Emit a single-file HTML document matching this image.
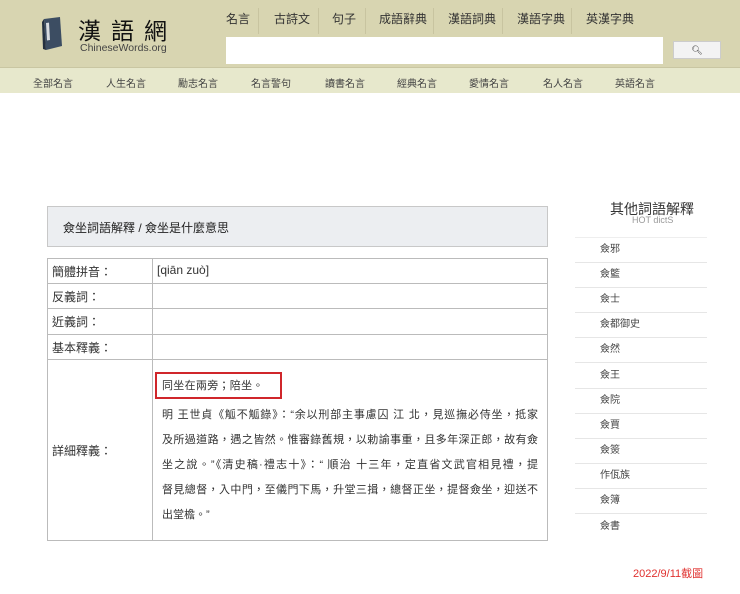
<!DOCTYPE html>
<html><head><meta charset="utf-8">
<style>
*{margin:0;padding:0;box-sizing:border-box}
body{width:740px;height:594px;background:#fff;font-family:"Liberation Sans","Noto Sans CJK TC",sans-serif;position:relative;overflow:hidden;color:#333}
.a{position:absolute;white-space:nowrap}
#hd{position:absolute;left:0;top:0;width:740px;height:67px;background:#d8d5b1}
#nv{position:absolute;left:0;top:67px;width:740px;height:26px;background:#e7e8cc;border-top:1px solid #c9c6a2}
.tl{font-size:12px;color:#333;top:10px}
.sep{position:absolute;top:8px;width:1px;height:26px;background:#c8c4a0}
.nl{font-size:10px;color:#444;top:7px}
.cell{position:absolute;border:1px solid #bbb}
.lb{font-size:12px;color:#333}
.si{position:absolute;left:575px;width:132px;height:25px;border-bottom:1px solid #e6e6e6;font-size:10px;color:#444;padding-left:25px;line-height:24px}
.tx{font-size:11px;color:#333;width:376px}
.tx div{height:25px;line-height:25px;text-align:justify;text-align-last:justify;white-space:nowrap}
.tx div.l{text-align-last:left}
</style></head><body>
<div id="hd">
<svg class="a" style="left:38px;top:16px" width="26" height="36" viewBox="0 0 26 36"><path d="M6 3 L22 1 L24 30 L8 34 Z" fill="#3c4d62"/><path d="M4 6 L6 3 L8 34 L5 33 Z" fill="#24303f"/><path d="M8 7 L11 6.6 L12 24 L9 24.5Z" fill="#d8dce0"/></svg>
<div class="a" style="left:78px;top:16px;font-size:23px;line-height:26px;color:#111;letter-spacing:10px;font-family:'Noto Sans CJK TC',sans-serif">漢語網</div>
<div class="a" style="left:80px;top:42px;font-size:10.5px;color:#444">ChineseWords.org</div>
<div class="a tl" style="left:226px">名言</div>
<div class="sep" style="left:258px"></div>
<div class="a tl" style="left:274px">古詩文</div>
<div class="sep" style="left:318px"></div>
<div class="a tl" style="left:332px">句子</div>
<div class="sep" style="left:365px"></div>
<div class="a tl" style="left:379px">成語辭典</div>
<div class="sep" style="left:433px"></div>
<div class="a tl" style="left:448px">漢語詞典</div>
<div class="sep" style="left:502px"></div>
<div class="a tl" style="left:517px">漢語字典</div>
<div class="sep" style="left:571px"></div>
<div class="a tl" style="left:586px">英漢字典</div>
<div class="a" style="left:226px;top:37px;width:437px;height:27px;background:#fff"></div>
<div class="a" style="left:673px;top:41px;width:48px;height:18px;background:#f3f3f3;border:1px solid #ccc;font-size:9px;text-align:center;line-height:16px">&#x1F50D;&#xFE0E;</div>
</div>
<div id="nv">
<div class="a nl" style="left:33px">全部名言</div>
<div class="a nl" style="left:106px">人生名言</div>
<div class="a nl" style="left:178px">勵志名言</div>
<div class="a nl" style="left:251px">名言警句</div>
<div class="a nl" style="left:325px">讀書名言</div>
<div class="a nl" style="left:397px">經典名言</div>
<div class="a nl" style="left:469px">愛情名言</div>
<div class="a nl" style="left:543px">名人名言</div>
<div class="a nl" style="left:615px">英語名言</div>
</div>

<div class="a" style="left:47px;top:206px;width:501px;height:41px;background:#eceef1;border:1px solid #c8c8c8"></div>
<div class="a" style="left:63px;top:219px;font-size:12px;color:#222">僉坐詞語解釋 / 僉坐是什麼意思</div>

<div class="cell" style="left:47px;top:258px;width:501px;height:283px"></div>
<div class="a" style="left:152px;top:258px;width:1px;height:283px;background:#bbb"></div>
<div class="a" style="left:47px;top:283px;width:501px;height:1px;background:#bbb"></div>
<div class="a" style="left:47px;top:308px;width:501px;height:1px;background:#bbb"></div>
<div class="a" style="left:47px;top:334px;width:501px;height:1px;background:#bbb"></div>
<div class="a" style="left:47px;top:359px;width:501px;height:1px;background:#bbb"></div>
<div class="a lb" style="left:52px;top:263px">簡體拼音：</div>
<div class="a lb" style="left:157px;top:263px">[qiān zuò]</div>
<div class="a lb" style="left:52px;top:288px">反義詞：</div>
<div class="a lb" style="left:52px;top:313px">近義詞：</div>
<div class="a lb" style="left:52px;top:339px">基本釋義：</div>
<div class="a lb" style="left:52px;top:442px">詳細釋義：</div>
<div class="a" style="left:155px;top:372px;width:127px;height:27px;border:2px solid #d0262b"></div>
<div class="a" style="left:162px;top:377px;font-size:11px;letter-spacing:0.3px">同坐在兩旁；陪坐。</div>
<div class="a tx" style="left:162px;top:403px">
<div>明 王世貞《觚不觚錄》：“余以刑部主事慮囚 江 北，見巡撫必侍坐，抵家</div>
<div>及所過道路，遇之皆然。惟審錄舊規，以勅諭事重，且多年深正郎，故有僉</div>
<div>坐之說。”《清史稿·禮志十》：“ 順治 十三年，定直省文武官相見禮，提</div>
<div>督見總督，入中門，至儀門下馬，升堂三揖，總督正坐，提督僉坐，迎送不</div>
<div class="l">出堂檐。”</div>
</div>

<div class="a" style="left:610px;top:199px;font-size:14px;color:#333">其他詞語解釋</div>
<div class="a" style="left:632px;top:215px;font-size:9px;color:#999">HOT dictS</div>
<div class="a" style="left:575px;top:237px;width:132px;height:1px;background:#eee"></div>
<div class="si" style="top:238px">僉邪</div>
<div class="si" style="top:263px">僉籃</div>
<div class="si" style="top:288px">僉士</div>
<div class="si" style="top:313px">僉都御史</div>
<div class="si" style="top:338px">僉然</div>
<div class="si" style="top:364px">僉王</div>
<div class="si" style="top:389px">僉院</div>
<div class="si" style="top:414px">僉賈</div>
<div class="si" style="top:439px">僉簽</div>
<div class="si" style="top:464px">作佤族</div>
<div class="si" style="top:489px">僉簿</div>
<div class="si" style="top:515px;border:none">僉書</div>
<div class="a" style="left:633px;top:565px;font-size:11px;color:#e0312f">2022/9/11截圖</div>
</body></html>
